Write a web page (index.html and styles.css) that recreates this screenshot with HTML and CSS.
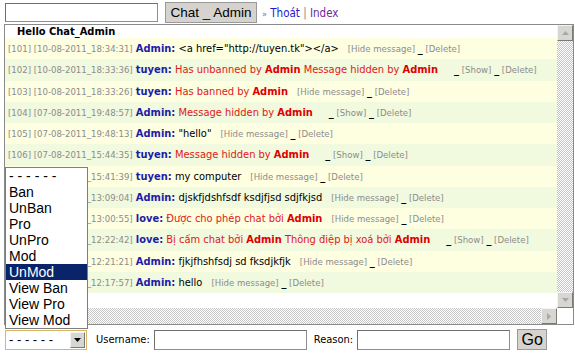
FILE: index.html
```html
<!DOCTYPE html>
<html>
<head>
<meta charset="utf-8">
<link rel="stylesheet" href="styles.css">
</head>
<body>
<div class="top">
  <div class="field name"></div>
  <div class="btn chat">Chat _ Admin</div>
  <span class="links"><span class="raquo">»</span> <a class="logout">Thoát</a> <span class="sep">|</span> <a class="index">Index</a></span>
</div>
<div class="box">
  <div class="view">
    <div class="hello">Hello Chat_Admin</div>
    <div class="row"><span class="meta">[101] [10-08-2011_18:34:31]</span> <b class="user">Admin:</b> <span class="msg">&lt;a href="http://tuyen.tk"&gt;&lt;/a&gt;</span><span class="act">[Hide message] <b>_</b> [Delete]</span></div>
    <div class="row"><span class="meta">[102] [10-08-2011_18:33:36]</span> <b class="user">tuyen:</b> <span class="sys">Has unbanned by <b>Admin</b> Message hidden by <b>Admin</b></span><span class="act show"><b>_</b> [Show] <b>_</b> [Delete]</span></div>
    <div class="row"><span class="meta">[103] [10-08-2011_18:33:26]</span> <b class="user">tuyen:</b> <span class="sys">Has banned by <b>Admin</b></span><span class="act">[Hide message] <b>_</b> [Delete]</span></div>
    <div class="row"><span class="meta">[104] [07-08-2011_19:48:57]</span> <b class="user">Admin:</b> <span class="sys">Message hidden by <b>Admin</b></span><span class="act show"><b>_</b> [Show] <b>_</b> [Delete]</span></div>
    <div class="row"><span class="meta">[105] [07-08-2011_19:48:13]</span> <b class="user">Admin:</b> <span class="msg">"hello"</span><span class="act">[Hide message] <b>_</b> [Delete]</span></div>
    <div class="row"><span class="meta">[106] [07-08-2011_15:44:35]</span> <b class="user">tuyen:</b> <span class="sys">Message hidden by <b>Admin</b></span><span class="act show"><b>_</b> [Show] <b>_</b> [Delete]</span></div>
    <div class="row"><span class="meta">[107] [07-08-2011_15:41:39]</span> <b class="user">tuyen:</b> <span class="msg">my computer</span><span class="act">[Hide message] <b>_</b> [Delete]</span></div>
    <div class="row"><span class="meta">[108] [07-08-2011_13:09:04]</span> <b class="user">Admin:</b> <span class="msg">djskfjdshfsdf ksdjfjsd sdjfkjsd</span><span class="act">[Hide message] <b>_</b> [Delete]</span></div>
    <div class="row"><span class="meta">[109] [07-08-2011_13:00:55]</span> <b class="user">love:</b> <span class="sys">Được cho phép chat bởi <b>Admin</b></span><span class="act">[Hide message] <b>_</b> [Delete]</span></div>
    <div class="row"><span class="meta">[110] [07-08-2011_12:22:42]</span> <b class="user">love:</b> <span class="sys">Bị cấm chat bởi <b>Admin</b> Thông điệp bị xoá bởi <b>Admin</b></span><span class="act show"><b>_</b> [Show] <b>_</b> [Delete]</span></div>
    <div class="row"><span class="meta">[111] [07-08-2011_12:21:21]</span> <b class="user">Admin:</b> <span class="msg">fjkjfhshfsdj sd fksdjkfjk</span><span class="act">[Hide message] <b>_</b> [Delete]</span></div>
    <div class="row"><span class="meta">[112] [07-08-2011_12:17:57]</span> <b class="user">Admin:</b> <span class="msg">hello</span><span class="act">[Hide message] <b>_</b> [Delete]</span></div>
  </div>
  <div class="vbar">
    <span class="sbtn"><svg width="7" height="4" viewBox="0 0 7 4"><path d="M3.5 0 L7 4 L0 4 Z" fill="#a8a8a8"/></svg></span>
    <span class="track"></span>
    <span class="sbtn"><svg width="7" height="4" viewBox="0 0 7 4"><path d="M0 0 L7 0 L3.5 4 Z" fill="#a8a8a8"/></svg></span>
  </div>
  <div class="hbar">
    <span class="track"></span>
    <span class="sbtn"><svg width="4" height="7" viewBox="0 0 4 7"><path d="M0 0 L4 3.5 L0 7 Z" fill="#a8a8a8"/></svg></span>
  </div>
  <div class="corner"></div>
</div>
<div class="bottom">
  <div class="select"><span class="sval">- - - - - -</span><span class="sarrow"><svg width="7" height="4" viewBox="0 0 7 4"><path d="M0 0 L7 0 L3.5 4 Z" fill="#000"/></svg></span></div>
  <span class="lbl user-lbl">Username:</span>
  <div class="field inp"></div>
  <span class="lbl reason-lbl">Reason:</span>
  <div class="field inp"></div>
  <div class="btn go">Go</div>
</div>
<ul class="dropdown">
  <li>- - - - - -</li>
  <li>Ban</li>
  <li>UnBan</li>
  <li>Pro</li>
  <li>UnPro</li>
  <li>Mod</li>
  <li class="sel">UnMod</li>
  <li>View Ban</li>
  <li>View Pro</li>
  <li>View Mod</li>
</ul>
</body>
</html>
```

FILE: styles.css
```css
* { box-sizing: border-box; }
html, body { margin: 0; padding: 0; background: #fff; }
body {
  font-family: "DejaVu Sans Condensed", "DejaVu Sans", "Liberation Sans", sans-serif;
  font-stretch: condensed;
  font-size: 11px;
  color: #000;
  width: 575px;
  height: 356px;
  overflow: hidden;
  position: relative;
}
.top {
  display: flex;
  align-items: center;
  height: 24px;
  padding: 1px 0 0 5px;
  white-space: nowrap;
}
.field {
  background: #fff;
  border: 1px solid #8e8e8e;
  border-top-color: #6f6f6f;
  border-left-color: #6f6f6f;
}
.name { width: 153px; height: 19px; }
.btn {
  background: #d6d3ce;
  border: 1px solid #9a9a9a;
  font-family: "Liberation Sans", Arial, sans-serif;
  font-stretch: normal;
  display: flex;
  align-items: center;
  justify-content: center;
  white-space: nowrap;
}
.chat {
  margin-left: 7px;
  width: 92px;
  height: 21px;
  font-size: 13.5px;
}
.links { margin-left: 5px; font-size: 11.5px; }
.raquo { color: #777; font-size: 9px; }
.logout { color: #1a1acc; }
.sep { color: #888; }
.index { color: #6a2a9a; }

.box {
  margin-left: 4px;
  width: 570px;
  height: 301px;
  border: 1px solid #8a8a8a;
  display: grid;
  grid-template-columns: 1fr 16px;
  grid-template-rows: 1fr 16px;
}
.view { overflow: hidden; white-space: nowrap; }
.hello {
  height: 13px;
  line-height: 14px;
  padding-left: 12px;
  font-weight: bold;
  font-size: 11px;
}
.row {
  height: 21.25px;
  line-height: 21px;
  padding-left: 3px;
  background: #fefee1;
}
.row:nth-child(odd) { background: #f1f9de; }
.meta { color: #8c8c8c; font-size: 9.5px; }
.user { color: #1c1ca8; }
.sys { color: #e01818; }
.sys b { color: #dd0000; }
.act { color: #8c8c8c; font-size: 9.5px; margin-left: 9px; }
.act b { color: #000; font-size: 11px; }
.act.show { margin-left: 16px; }

.vbar { display: flex; flex-direction: column; }
.hbar { display: flex; }
.track {
  flex: 1;
  background: repeating-conic-gradient(#c6c6c6 0 25%, #fff 0 50%) 0 0 / 2px 2px;
}
.sbtn {
  width: 16px;
  height: 16px;
  flex: none;
  background: #d8d6d0;
  border: 1px solid;
  border-color: #f4f4f4 #7a7a7a #7a7a7a #f4f4f4;
  display: flex;
  align-items: center;
  justify-content: center;
}
.corner { background: #fff; }

.bottom {
  display: flex;
  align-items: center;
  padding: 4px 0 0 5px;
  white-space: nowrap;
}
.select {
  width: 82px;
  height: 20px;
  border: 1px solid #d9b665;
  display: flex;
  align-items: center;
  justify-content: space-between;
  padding: 0 1px 0 3px;
  font-family: "Liberation Sans", Arial, sans-serif;
  font-stretch: normal;
  font-size: 13px;
}
.sarrow {
  width: 15px;
  height: 16px;
  background: #d8d6d0;
  border: 1px solid;
  border-color: #f4f4f4 #7a7a7a #7a7a7a #f4f4f4;
  display: flex;
  align-items: center;
  justify-content: center;
}
.lbl { font-size: 11px; }
.user-lbl { margin-left: 9px; }
.reason-lbl { margin-left: 7px; }
.inp { width: 153px; height: 20px; margin-left: 4px; }
.go {
  margin-left: 7px;
  width: 30px;
  height: 21px;
  font-size: 16px;
}

.dropdown {
  position: absolute;
  left: 5px;
  top: 167px;
  width: 83px;
  height: 162px;
  margin: 0;
  padding: 0;
  list-style: none;
  background: #fff;
  border: 1px solid #7f7f7f;
  font-family: "Liberation Sans", Arial, sans-serif;
  font-stretch: normal;
  font-size: 14px;
}
.dropdown li {
  height: 16px;
  line-height: 16px;
  padding-left: 3px;
}
.dropdown li.sel { background: #0a246a; color: #fff; }
```
